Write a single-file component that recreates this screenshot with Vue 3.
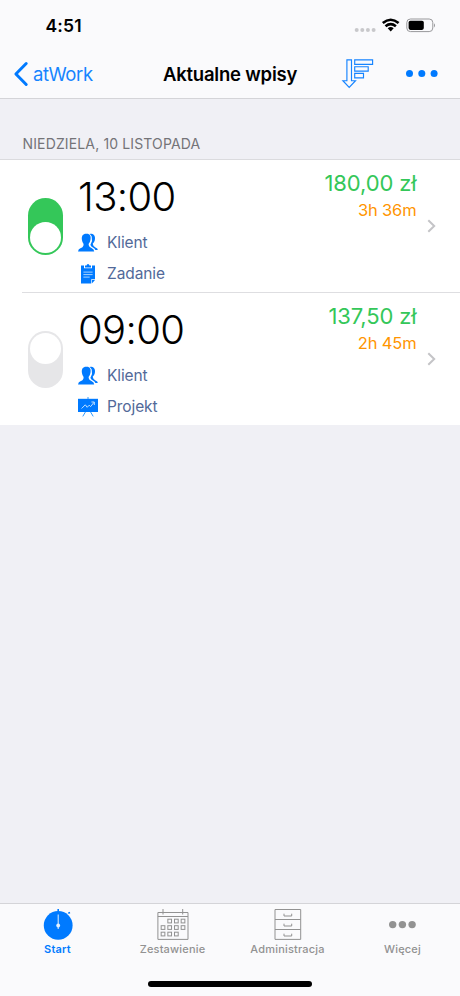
<script setup>
const entries = [
  { time: '13:00', on: true, amount: '180,00 zł', duration: '3h 36m', second: 'Zadanie', icon: 'task', key: 'a' },
  { time: '09:00', on: false, amount: '137,50 zł', duration: '2h 45m', second: 'Projekt', icon: 'project', key: 'b' },
]
const days = [[29, 0], [49, 0], [69, 0], [9, 1], [29, 1], [49, 1], [69, 1], [9, 2], [29, 2], [49, 2]]
</script>

<template>
  <div class="screen">
    <header class="top">
      <div class="status">
        <span class="clock">4:51</span>
        <svg class="signals" width="84" height="20" viewBox="0 0 84 20">
          <g fill="#c8c8cb">
            <circle cx="6.7" cy="14" r="2" /><circle cx="12.3" cy="14" r="2" />
            <circle cx="17.9" cy="14" r="2" /><circle cx="23.6" cy="14" r="2" />
          </g>
          <g fill="none" stroke="#000" stroke-width="2.6">
            <path d="M32.8 7.1Q40.7 .4 48.6 7.1" />
            <path d="M35.5 10.3Q40.7 6 45.9 10.3" />
          </g>
          <path d="M37.7 12.3Q40.7 9.9 43.7 12.3L40.7 15.6Z" />
          <rect x="56.8" y="3" width="26" height="12.6" rx="3.6" fill="none" stroke="#98989b" />
          <rect x="58.6" y="4.7" width="15.2" height="9.2" rx="1.8" />
          <path d="M84 7.2Q86 9.3 84 11.4Z" fill="#98989b" />
        </svg>
      </div>
      <nav class="nav">
        <button class="back">
          <svg width="14" height="24" viewBox="0 0 14 24"><path d="M12.2 1.5 1.9 12 12.2 22.5" fill="none" stroke="#007aff" stroke-width="3" stroke-linecap="round" stroke-linejoin="round" /></svg>
          <span class="back-text">atWork</span>
        </button>
        <h1 class="title">Aktualne wpisy</h1>
        <button class="sort">
          <svg width="32" height="30" viewBox="0 0 32 30" fill="none" stroke="#1684ff" stroke-width="1.15">
            <path d="M4.9.8H9.5V21.7H13.5L7.2 28.4.9 21.7H4.9Z" />
            <path d="M12.7.8H30.6V5.3H12.7ZM12.7 7.7H26.2V12.1H12.7ZM12.7 14.4H21.5V18.9H12.7Z" />
          </svg>
        </button>
        <button class="more">
          <svg width="32" height="8" viewBox="0 0 32 8" fill="#007aff"><circle cx="3.5" cy="3.4" r="3.5" /><circle cx="15.8" cy="3.4" r="3.5" /><circle cx="28.1" cy="3.4" r="3.5" /></svg>
        </button>
      </nav>
    </header>

    <main class="content">
      <h2 class="day">NIEDZIELA, 10 LISTOPADA</h2>
      <section class="list">
        <article v-for="entry in entries" :key="entry.key" class="entry" :class="entry.key">
          <div class="switch" :class="{ on: entry.on }"><span class="knob"></span></div>
          <div class="details">
            <div class="time">{{ entry.time }}</div>
            <div class="line">
              <svg width="20" height="20" viewBox="0 0 20 20" fill="#007aff">
                <path d="M11.5 1Q12.4.6 13.4.8C16.7 1.3 17.5 4.2 16.8 7.2Q16.1 9.7 14.7 10.8Q15 13.4 17.5 14.4Q19.8 15.3 19.8 17H17.4Q16.7 15.4 14.9 14.6Q12.6 13.5 12.4 11.8Q14.9 7.6 13.7 3.5Q12.9 1.8 11.5 1Z" />
                <path d="M8.1.8C11.8.4 13.2 3 12.5 6.7Q12 9.6 10.6 11Q10.6 13.9 13.5 15Q16.2 16.1 16.2 18.5H0Q.2 16.1 2.9 15.1Q5.7 14.1 5.6 11Q4.3 9.4 3.9 6.7C3.4 3 4.9.8 8.1.8Z" />
              </svg>
              <span>Klient</span>
            </div>
            <div class="line">
              <svg v-if="entry.icon === 'task'" width="20" height="20" viewBox="0 0 20 20">
                <path d="M3 1.6H6V4.2H14V1.6H17V15.2H13.2V19.5H3Z" fill="#007aff" />
                <path d="M7 3.4V1.5H8.5Q8.7 0 10 0T11.5 1.5H13V3.4Z" fill="#007aff" />
                <path d="M5.4 8.1H14.6M5.4 10.6H14.6M5.4 13.1H11.7" stroke="#b9dcff" stroke-width=".9" />
                <path d="M13.9 19.5V16H17Z" fill="#007aff" />
              </svg>
              <svg v-else width="20" height="20" viewBox="0 0 20 20">
                <path d="M10 0V3M7.4 15 4.8 19.4M12.6 15 15.2 19.4" stroke="#329cff" />
                <path d="M0 1.8H20V15H0Z" fill="#007aff" />
                <path d="M3.6 11.5 7.3 7.8 9.2 10.3 11.2 8.2 12.6 9.6 16 5.3M13.4 5H16.3V8" fill="none" stroke="#c1e1ff" />
              </svg>
              <span>{{ entry.second }}</span>
            </div>
          </div>
          <div class="values">
            <div class="amount">{{ entry.amount }}</div>
            <div class="duration">{{ entry.duration }}</div>
          </div>
          <svg class="chevron" width="9" height="14" viewBox="0 0 9 14"><path d="M1.3 1.2 7.2 7 1.3 12.8" fill="none" stroke="#c4c4c7" stroke-width="2" /></svg>
        </article>
      </section>
    </main>

    <footer class="bottom">
      <nav class="tabs">
        <div class="tab active">
          <svg width="32" height="33" viewBox="0 0 32 33">
            <circle cx="16.2" cy="17.4" r="14.4" fill="#007aff" />
            <path d="M16.2 1V4M26.3 5.3 28 4.6" stroke="#007aff" stroke-width="1.6" />
            <path d="M16.2 6.5V21" stroke="#d0e7ff" stroke-width="1.1" /><circle cx="16.2" cy="17.5" r="1.9" fill="#e4f2ff" />
          </svg>
          <span>Start</span>
        </div>
        <div class="tab calendar">
          <svg width="32" height="33" viewBox="0 0 32 33" fill="none" stroke="#929292" stroke-width="1">
            <path d="M.9 4.5H31V31.4H.9ZM.9 8.5H31M6 1V6.5M25.7 1V6.5" />
            <rect v-for="(day, i) in days" :key="i" :x="(day[0] + 3.5) / 3" :y="11.2 + day[1] * 6.5" width="3.7" height="3.7" />
          </svg>
          <span>Zestawienie</span>
        </div>
        <div class="tab admin">
          <svg width="32" height="33" viewBox="0 0 32 33" fill="none" stroke="#929292" stroke-width="1">
            <path d="M3 1.5H28.7V31.4H3ZM3 11.5H28.7M3 21.5H28.7M12 5.7V8H19.7V5.7M12 15.7V18H19.7V15.7M12 25.7V28H19.7V25.7" />
          </svg>
          <span>Administracja</span>
        </div>
        <div class="tab rest">
          <svg width="32" height="33" viewBox="0 0 32 33" fill="#929292"><circle cx="5.7" cy="16.6" r="3.7" /><circle cx="15.4" cy="16.6" r="3.7" /><circle cx="25.1" cy="16.6" r="3.7" /></svg>
          <span>Więcej</span>
        </div>
      </nav>
      <div class="home"></div>
    </footer>
  </div>
</template>

<style>
body { margin: 0; }
</style>

<style scoped>
.screen { width: 460px; height: 996px; display: flex; flex-direction: column; background: #f0f0f5; font-family: Inter, sans-serif; overflow: hidden; box-sizing: border-box; }
svg { display: block; flex: none; overflow: visible; }
button { border: 0; padding: 0; background: none; font: inherit; }
.top { height: 99px; flex: none; box-sizing: border-box; background: #fafafc; border-bottom: 1px solid #d4d4d8; }
.status { height: 50px; display: flex; justify-content: space-between; padding: 0 26px 0 45.5px; box-sizing: border-box; }
.clock { font-size: 17.5px; font-weight: 600; line-height: 20px; padding-top: 16px; letter-spacing: .15px; }
.signals { margin-top: 16px; }
.nav { height: 48px; display: flex; align-items: center; padding-left: 14px; }
.back { display: flex; align-items: center; gap: 5px; width: 149px; color: #1684ff; font-size: 18.5px; }
.back-text { letter-spacing: -.4px; }
.title { margin: 0; width: 179px; font-size: 18.5px; font-weight: 600; letter-spacing: -.22px; white-space: nowrap; }
.sort { width: 64px; }
.content { flex: 1; }
.day { height: 60px; margin: 0; box-sizing: border-box; padding: 35px 0 0 22.5px; font-size: 14px; line-height: 19px; font-weight: 400; letter-spacing: .14px; color: #747478; }
.list { background: #fff; border-top: 1px solid #dbdbde; }
.entry { height: 133px; position: relative; display: flex; padding-left: 28px; box-sizing: border-box; }
.b { height: 132px; }
.a::after { content: ''; position: absolute; left: 22px; right: 0; bottom: 0; height: 1px; background: #dedee1; }
.switch { width: 34.5px; height: 57px; margin-top: 38px; border-radius: 18px; background: #e6e6e8; display: flex; padding: 1.75px; box-sizing: border-box; }
.knob { width: 31px; height: 31px; border-radius: 50%; background: #fff; }
.on { background: #34c759; align-items: flex-end; }
.details { margin-left: 15.5px; width: 170px; }
.time { height: 67px; padding-top: 13px; box-sizing: border-box; font-size: 40px; line-height: 48px; font-weight: 300; letter-spacing: -.6px; }
.line { height: 31px; display: flex; align-items: center; gap: 9px; font-size: 15.5px; letter-spacing: -.1px; color: #526999; }
.values { width: 168.5px; text-align: right; padding-top: 10px; white-space: nowrap; }
.amount { color: #34c759; font-size: 22px; line-height: 27px; letter-spacing: -.12px; }
.duration { color: #ff9500; font-size: 16.5px; line-height: 20px; margin-top: 3px; letter-spacing: -.15px; }
.chevron { margin: 59px 0 0 10.5px; }
.bottom { height: 93px; flex: none; box-sizing: border-box; border-top: 1px solid #d4d4d8; background: #fafafc; }
.tabs { height: 77px; display: grid; grid-template-columns: repeat(4, 1fr); }
.tab { display: flex; flex-direction: column; align-items: center; padding-top: 4px; color: #929292; font-size: 11px; font-weight: 500; line-height: 15px; letter-spacing: .18px; }
.tab span { margin-top: 1px; }
.active { color: #007aff; font-weight: 600; }
.home { width: 164px; height: 6px; border-radius: 3px; background: #000; margin: 0 auto; }
</style>
